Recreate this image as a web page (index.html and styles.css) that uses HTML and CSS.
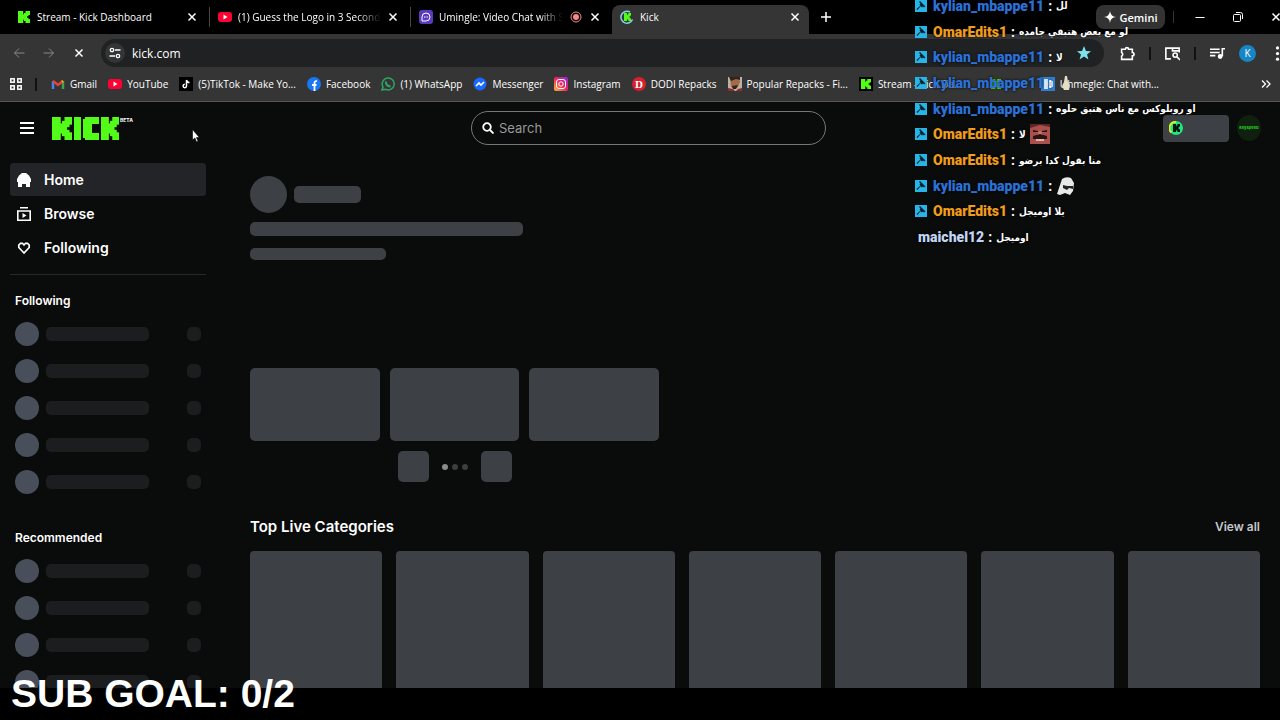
FILE: index.html
```
<!DOCTYPE html>
<html lang="en">
  <head>
    <meta charset="UTF-8" />
    <meta name="viewport" content="width=device-width, initial-scale=1.0" />
    <title>Kick</title>
    <link rel="stylesheet" href="styles.css">
  </head>
  <body>
    <!-- shared icons -->
    <svg class="defs" aria-hidden="true">
      <symbol id="k" viewBox="0 0 16 18" preserveAspectRatio="none">
        <rect width="7" height="18"/><rect x="10" width="6" height="6"/><rect x="8" y="3" width="6" height="5"/>
        <rect x="6" y="5" width="6" height="8"/><rect x="8" y="10" width="6" height="5"/><rect x="10" y="12" width="6" height="6"/>
      </symbol>
      <symbol id="close" viewBox="0 0 12 12"><path d="M2.5 2.5l7 7M9.500 2.500l-7 7" fill="none" stroke="currentColor" stroke-width="1.500"/></symbol>
      <symbol id="yt" viewBox="0 0 14 14"><rect y="2" width="14" height="10" rx="3" fill="#f03"/><path d="M5.500 4.500v5l4-2.500z" fill="#fff"/></symbol>
      <symbol id="mod" viewBox="0 0 12 12"><rect width="12" height="12" fill="#25b5e8"/><path d="M5 1l5.500 5.500-1.500 1-1-1-1 1-1.500-1.200L2.500 10 1.500 9l4-3.500L4.500 4.500l1-1L4 2z" fill="#08202c"/></symbol>
    </svg>

    <header class="browser">
      <div class="tabs">
        <div class="tab">
          <svg class="ico green" viewBox="0 0 14 14"><use href="#k" x="1" y="1" width="12" height="12"/></svg>
          <span>Stream - Kick Dashboard</span>
          <button aria-label="Close tab"><svg><use href="#close"/></svg></button>
        </div>
        <div class="tab">
          <svg class="ico"><use href="#yt"/></svg>
          <span class="fade">(1) Guess the Logo in 3 Seconds</span>
          <button aria-label="Close tab"><svg><use href="#close"/></svg></button>
        </div>
        <div class="tab">
          <svg class="ico" viewBox="0 0 14 14"><rect width="14" height="14" rx="3" fill="#5b3bbd"/><path d="M3 11V7a4 4 0 1 1 4 4z" fill="none" stroke="#fff"/><path d="M5 7h1M6.500 7h1M8 7h1" stroke="#fff"/></svg>
          <span class="fade">Umingle: Video Chat with Strangers</span>
          <svg class="ico rec" viewBox="0 0 14 14"><circle cx="7" cy="7" r="5" fill="none" stroke="#f28b82"/><circle cx="7" cy="7" r="3" fill="#f28b82"/></svg>
          <button aria-label="Close tab"><svg><use href="#close"/></svg></button>
        </div>
        <div class="tab active">
          <svg class="ico green" viewBox="0 0 14 14"><path d="M10 2a6 6 0 1 0 2.500 7.500" fill="none" stroke="#7fd6e0" stroke-width="1.500"/><use href="#k" x="4" y="3" width="7" height="8"/></svg>
          <span>Kick</span>
          <button aria-label="Close tab"><svg><use href="#close"/></svg></button>
        </div>
        <button class="new-tab" aria-label="New tab"><svg viewBox="0 0 12 12"><path d="M6 1v10M1 6h10" stroke="currentColor" stroke-width="1.500"/></svg></button>
        <button class="gemini"><svg viewBox="0 0 12 12"><path d="M6 0Q6.500 5.500 12 6 6.500 6.500 6 12 5.500 6.500 0 6 5.500 5.500 6 0z" fill="#fff"/></svg>Gemini</button>
        <div class="window-buttons">
          <button aria-label="Minimize"><svg viewBox="0 0 12 12"><path d="M1.500 6.500h9" stroke="currentColor"/></svg></button>
          <button aria-label="Restore"><svg viewBox="0 0 12 12" fill="none" stroke="currentColor"><rect x="1.500" y="3.500" width="7" height="7" rx="1"/><path d="M4 1.500h4.500a2 2 0 0 1 2 2V8"/></svg></button>
          <button aria-label="Close"><svg><use href="#close"/></svg></button>
        </div>
      </div>

      <div class="toolbar">
        <button class="dim" aria-label="Back"><svg viewBox="0 0 12 12" fill="none" stroke="currentColor"><path d="M11.500 6H1.500M6 1.500L1.500 6 6 10.500"/></svg></button>
        <button class="dim" aria-label="Forward"><svg viewBox="0 0 12 12" fill="none" stroke="currentColor"><path d="M.5 6h10M6 1.500L10.500 6 6 10.500"/></svg></button>
        <button aria-label="Stop"><svg><use href="#close"/></svg></button>
        <div class="address">
          <button class="site" aria-label="Site information"><svg viewBox="0 0 12 12" fill="none" stroke="currentColor" stroke-width="1.300"><circle cx="3" cy="3" r="1.700"/><path d="M6 3h5.500M.5 9H6"/><circle cx="9" cy="9" r="1.700"/></svg></button>
          <input type="text" value="kick.com" aria-label="Address">
          <button aria-label="Bookmark this tab"><svg class="star" viewBox="0 0 12 12"><path d="M6 0l1.700 4.200 4.300.2-3.400 2.800L9.800 11.500 6 9.100l-3.800 2.400 1.200-4.300L0 4.400l4.300-.2z" fill="#7fe0ea"/></svg></button>
        </div>
        <div class="tools">
          <button aria-label="Extensions"><svg viewBox="0 0 14 14" fill="none" stroke="currentColor" stroke-width="1.500"><path d="M1.500 3h3.500a1.500 1.500 0 0 1 3 0h3.500v3a1.600 1.600 0 0 1 0 3.200v3.300h-10V9.500a2 2 0 0 0 0-3.500z"/></svg></button>
          <i></i>
          <button aria-label="Search tabs"><svg viewBox="0 0 14 14" fill="none" stroke="currentColor" stroke-width="1.500"><path d="M5.500 12H0.800V2h12.500v4M7 2v2.500h6"/><circle cx="9.500" cy="8.500" r="2"/><path d="M11 10l3 3"/></svg></button>
          <i></i>
          <button aria-label="Media"><svg viewBox="0 0 14 14" fill="none" stroke="currentColor" stroke-width="1.500"><path d="M0 3h9M0 6h9M0 9h5M14 2.500h-2.500v7"/><circle cx="9.500" cy="9.800" r="1.500" fill="currentColor"/></svg></button>
          <button class="profile">K</button>
          <button class="more" aria-label="More"><svg viewBox="0 0 12 12" fill="currentColor"><circle cx="6" cy="1.500" r="1.300"/><circle cx="6" cy="6" r="1.300"/><circle cx="6" cy="10.500" r="1.300"/></svg></button>
        </div>
      </div>

      <nav class="bookmarks">
        <button class="apps" aria-label="Apps"><svg viewBox="0 0 12 12" fill="none" stroke="currentColor" stroke-width="1.500"><rect x=".8" y=".8" width="3.400" height="3.400"/><rect x="7.800" y=".8" width="3.400" height="3.400"/><rect x=".8" y="7.800" width="3.400" height="3.400"/><rect x="7.800" y="7.800" width="3.400" height="3.400"/></svg></button>
        <i></i>
        <a href="#"><svg class="ico" viewBox="0 0 14 14" fill="none" stroke-width="2.500"><path d="M2 12V4" stroke="#4285f4"/><path d="M12 12V4" stroke="#34a853"/><path d="M2 4l5 4 5-4" stroke="#ea4335"/><path d="M11 4.800l1-.8" stroke="#fbbc04"/></svg>Gmail</a>
        <a href="#"><svg class="ico"><use href="#yt"/></svg>YouTube</a>
        <a href="#"><svg class="ico" viewBox="0 0 14 14"><rect width="14" height="14" fill="#000"/><path d="M7.500 3v6a1.700 1.700 0 1 1-1.700-1.700M7.500 3q.5 2.500 3 2.500" fill="none" stroke="#fff" stroke-width="1.500"/></svg>(5)TikTok - Make Yo...</a>
        <a href="#"><svg class="ico" viewBox="0 0 14 14"><circle cx="7" cy="7" r="7" fill="#1877f2"/><path d="M7.500 14V6q0-2 2.500-1.800M5 8h4.500" fill="none" stroke="#fff" stroke-width="1.800"/></svg>Facebook</a>
        <a href="#"><svg class="ico" viewBox="0 0 14 14" fill="none"><path d="M1 13l1-3a6 6 0 1 1 2.200 2.200z" stroke="#2fa565" stroke-width="1.500"/><path d="M4.800 4.500q0 4.500 4.700 5" stroke="#2fa565" stroke-width="2"/></svg>(1) WhatsApp</a>
        <a href="#"><svg class="ico" viewBox="0 0 14 14"><circle cx="7" cy="7" r="6.500" fill="#1769ff"/><path d="M3 9l3-3 2 2 3-3" fill="none" stroke="#fff" stroke-width="1.600"/></svg>Messenger</a>
        <a href="#"><svg class="ico" viewBox="0 0 14 14"><defs><linearGradient id="ig" x1="0" y1="1" x2="1" y2="0"><stop stop-color="#ffc02e"/><stop offset=".5" stop-color="#f0245e"/><stop offset="1" stop-color="#8a2be2"/></linearGradient></defs><rect width="14" height="14" rx="2" fill="url(#ig)"/><g fill="none" stroke="#fff"><rect x="2.500" y="2.500" width="9" height="9" rx="2.500"/><circle cx="7" cy="7" r="2.200"/></g></svg>Instagram</a>
        <a href="#"><svg class="ico" viewBox="0 0 14 14"><circle cx="7" cy="7" r="7" fill="#d5202f"/><text x="7" y="11" text-anchor="middle" class="dodi">D</text></svg>DODI Repacks</a>
        <a href="#"><svg class="ico" viewBox="0 0 14 14"><rect width="14" height="14" fill="#b9b2aa"/><path d="M2 0h9l1 5-2 5-3 2-4-2z" fill="#a46b48"/><path d="M1 0h11v3L8 2 3 4zM4 9l6-1-2 4H5z" fill="#35221a"/><path d="M0 11l5 1 2 2H0zM14 11l-4 1-2 2h6z" fill="#8c2c25"/></svg>Popular Repacks - Fi...</a>
        <a href="#"><svg class="ico green" viewBox="0 0 14 14"><rect width="14" height="14" fill="#000"/><use href="#k" x="2" y="2" width="10" height="10"/></svg>Stream - Kick Da...</a>
        <a href="#" class="short" aria-label="Kick"><svg class="ico green" viewBox="0 0 14 14"><use href="#k" x="2" y="2" width="10" height="10"/></svg></a>
        <a href="#" class="last"><svg class="ico" viewBox="0 0 14 14"><rect width="14" height="14" fill="#2f7fd6"/><path d="M3 2h4v10H3zM8 4h4v6H8z" fill="#d6e6f5"/></svg>Uhmegle: Chat with...</a>
        <button class="overflow" aria-label="More bookmarks"><svg viewBox="0 0 12 12" fill="none" stroke="currentColor" stroke-width="1.300"><path d="M2 2.500L5.500 6 2 9.500M6.500 2.500L10 6 6.500 9.500"/></svg></button>
      </nav>
    </header>

    <div class="page">
      <header class="topbar">
        <div class="brand">
          <button aria-label="Menu"><svg viewBox="0 0 14 12"><path d="M0 1h14M0 6h14M0 11h14" stroke="#fff" stroke-width="2"/></svg></button>
          <a href="#" class="logo" aria-label="Kick">
            <svg viewBox="0 0 67 23"><use href="#k" width="20" height="23"/><rect x="22" width="7" height="23"/><path d="M33 0h14v7h-7v9h7v7H33v-2h-2V2h2z"/><use href="#k" x="49" width="18" height="23"/></svg>
          </a>
          <span class="beta">BETA</span>
        </div>
        <label class="search">
          <svg viewBox="0 0 12 12" fill="none" stroke="#fff" stroke-width="1.800"><circle cx="5" cy="5" r="3.800"/><path d="M8 8l3.500 3.500"/></svg>
          <input type="text" placeholder="Search" aria-label="Search">
        </label>
        <div class="account">
          <button class="kicks" aria-label="Kicks"><svg viewBox="0 0 14 14"><circle cx="7" cy="7" r="7" fill="#21e57e"/><path d="M2.500 11.500A6 6 0 0 1 7 1" fill="none" stroke="#d5ef2d" stroke-width="2"/><use href="#k" x="4" y="3" width="7" height="8" fill="#05170c"/></svg></button>
          <button class="avatar">keyspeed</button>
        </div>
      </header>

      <div class="content">
        <aside class="sidebar">
          <nav>
            <a href="#" class="current"><svg viewBox="0 0 14 14" fill="#fff"><path d="M5 0h4l3 2.500L14 6v3h-1v5H9v-3H5v3H1V9H0V6l2-3.500z"/></svg>Home</a>
            <a href="#"><svg viewBox="0 0 14 14" fill="none" stroke="#fff" stroke-width="1.600"><path d="M3 .8h8M.8 4h12.400v9.200H.8z"/><path d="M5.500 6v5L9.500 8.500z" fill="#fff" stroke="none"/></svg>Browse</a>
            <a href="#"><svg viewBox="0 0 14 14" fill="none" stroke="#fff" stroke-width="1.700"><path d="M7 12L1.800 6.500V4L3.500 2.300h2L7 4l1.500-1.700h2L12.200 4v2.500z"/></svg>Following</a>
          </nav>
          <h2>Following</h2>
          <ul>
            <li><b></b><span></span><i></i></li>
            <li><b></b><span></span><i></i></li>
            <li><b></b><span></span><i></i></li>
            <li><b></b><span></span><i></i></li>
            <li><b></b><span></span><i></i></li>
          </ul>
          <h2>Recommended</h2>
          <ul>
            <li><b></b><span></span><i></i></li>
            <li><b></b><span></span><i></i></li>
            <li><b></b><span></span><i></i></li>
            <li><b></b><span></span><i></i></li>
          </ul>
        </aside>

        <main>
          <section class="featured">
            <div class="streamer"><div class="bone photo"></div><div class="bone username"></div></div>
            <div class="bone line"></div>
            <div class="bone line short"></div>
            <div class="previews">
              <div class="bone"></div><div class="bone"></div><div class="bone"></div>
            </div>
            <div class="pager">
              <button class="bone" aria-label="Previous"></button>
              <div class="dots"><i class="on"></i><i></i><i></i></div>
              <button class="bone" aria-label="Next"></button>
            </div>
          </section>
          <section>
            <div class="heading"><h1>Top Live Categories</h1><a href="#">View all</a></div>
            <div class="categories">
              <div class="bone"></div><div class="bone"></div><div class="bone"></div><div class="bone"></div>
              <div class="bone"></div><div class="bone"></div><div class="bone"></div>
            </div>
          </section>
        </main>
      </div>
    </div>
    <div class="bottom"></div>

    <svg class="cursor" viewBox="0 0 8 14"><path d="M.5.5v10.500l2.300-2 1.800 4 1.500-.7-1.700-3.800h3z" fill="#fff" stroke="#000" stroke-width=".6"/></svg>

    <!-- stream overlay -->
    <div class="chat">
      <p><svg><use href="#mod"/></svg><b class="blue">kylian_mbappe11</b> : <bdi>لل</bdi></p>
      <p><svg><use href="#mod"/></svg><b class="orange">OmarEdits1</b> : <bdi>لو مع بعض هتبقي جامده</bdi></p>
      <p><svg><use href="#mod"/></svg><b class="blue">kylian_mbappe11</b> : <bdi>لا</bdi></p>
      <p><svg><use href="#mod"/></svg><b class="blue">kylian_mbappe11</b> : <svg class="emote" viewBox="0 0 20 20"><path d="M9 3l2 0 1 6 2 3-1 5H8l-2-4 2-4z" fill="#e4dfc4"/></svg></p>
      <p><svg><use href="#mod"/></svg><b class="blue">kylian_mbappe11</b> : <bdi>او روبلوكس مع ناس هتبق حلوه</bdi></p>
      <p><svg><use href="#mod"/></svg><b class="orange">OmarEdits1</b> : <bdi>لا</bdi> <svg class="emote" viewBox="0 0 20 20"><rect width="20" height="20" fill="#a8504c"/><path d="M0 0h20v3L10 1 0 4z" fill="#5a2725"/><path d="M3 6l5 1v1H3zM12 7l5-1v2h-5z" fill="#2c1110"/><path d="M9 7h2l2 4H7z" fill="#c8706a"/><path d="M3 12l7-2 7 2v3H3z" fill="#2a1312"/><path d="M6 15h8v2H6z" fill="#d9b3ac"/></svg></p>
      <p><svg><use href="#mod"/></svg><b class="orange">OmarEdits1</b> : <bdi>منا بقول كدا برضو</bdi></p>
      <p><svg><use href="#mod"/></svg><b class="blue">kylian_mbappe11</b> : <svg class="emote" viewBox="0 0 20 20"><path d="M6 3q4-3 9-1l3 5-1 8-3 4-5-2-5 2-3-1z" fill="#e8e8e8"/><path d="M7 9l4 1h6v3l-4-1-2 2-4-2z" fill="#222"/></svg></p>
      <p><svg><use href="#mod"/></svg><b class="orange">OmarEdits1</b> : <bdi>يلا اوميجل</bdi></p>
      <p class="plain"><b>maichel12</b> : <bdi>اوميجل</bdi></p>
    </div>
    <div class="goal">SUB GOAL: 0/2</div>
  </body>
</html>
```
FILE: styles.css
```
* {
    box-sizing: border-box;
}
body {
    margin: 0;
    height: 100vh;
    display: flex;
    flex-direction: column;
    overflow: hidden;
    position: relative;
    background-color: #000;
    color: #fff;
    font-family: Inter, sans-serif;
}
button {
    display: flex;
    align-items: center;
    justify-content: center;
    padding: 0;
    border: none;
    background: none;
    color: inherit;
    font: inherit;
    cursor: pointer;
}
a {
    color: inherit;
    text-decoration: none;
}
input {
    border: none;
    outline: none;
    background: none;
    color: inherit;
    font: inherit;
    padding: 0;
    min-width: 0;
    flex: 1;
}
svg {
    display: block;
    flex: none;
    width: 12px;
    height: 12px;
}
.defs {
    position: absolute;
    width: 0;
    height: 0;
}
.ico {
    width: 14px;
    height: 14px;
}
.green {
    fill: #53fc18;
}

/* browser window */
.browser {
    background-color: #353535;
    border-bottom: 1px solid #555;
    font-family: "Open Sans", sans-serif;
    font-size: 10px;
    font-weight: 500;
}
.tabs {
    display: flex;
    align-items: center;
    height: 34px;
    padding-left: 9px;
    background-color: #000;
}
.tab {
    display: flex;
    align-items: center;
    gap: 6px;
    width: 201px;
    height: 20px;
    padding: 0 11px 0 8px;
    border-right: 1px solid #444;
    white-space: nowrap;
}
.tab span {
    flex: 1;
    overflow: hidden;
}
.tab .fade {
    -webkit-mask-image: linear-gradient(to left, transparent, #000 24px);
}
.tab.active {
    height: 29px;
    width: 197px;
    padding: 0 8px 5px;
    border: none;
    align-self: flex-end;
    border-radius: 8px 8px 0 0;
    background-color: #353535;
}
.tab:nth-child(3) {
    border: none;
}
.new-tab {
    margin-left: 11px;
}
.gemini {
    gap: 4px;
    width: 69px;
    height: 24px;
    margin-left: auto;
    border-radius: 8px;
    background-color: #333;
    font-size: 11px;
    font-weight: 600;
}
.window-buttons {
    display: flex;
    gap: 26px;
    margin: 0 -2px 0 8px;
    padding-left: 20px;
    border-left: 1px solid #333;
}
.toolbar {
    display: flex;
    align-items: center;
    gap: 18px;
    height: 38px;
    padding: 0 0 0 13px;
}
.dim {
    color: #888;
}
.address {
    flex: 1;
    display: flex;
    align-items: center;
    gap: 7px;
    height: 28px;
    margin-left: -2px;
    padding: 0 13px 0 4px;
    border-radius: 14px;
    background-color: #1f2123;
    font-size: 12px;
}
.site {
    width: 20px;
    height: 20px;
    border-radius: 10px;
    background-color: #353535;
}
.star {
    width: 14px;
    height: 14px;
}
.tools {
    display: flex;
    align-items: center;
    gap: 14px;
    margin: 0 -5px 0 -2px;
}
.tools svg {
    width: 15px;
    height: 15px;
}
.browser i {
    width: 2px;
    height: 13px;
    background-color: #111;
}
.profile {
    width: 17px;
    height: 17px;
    border-radius: 50%;
    background-color: #1686c4;
    font-size: 10px;
}
.bookmarks {
    display: flex;
    align-items: center;
    height: 29px;
    padding: 0 8px 5px 10px;
    gap: 11px;
}
.bookmarks a {
    display: flex;
    align-items: center;
    gap: 5px;
    white-space: nowrap;
}
.bookmarks .apps {
    margin-right: 2px;
}
.bookmarks .apps + i {
    margin-right: 3px;
}
.bookmarks .short {
    margin-left: 16px;
}
.bookmarks .last {
    margin-left: 27px;
}
.overflow {
    margin-left: auto;
}
.dodi {
    font: bold 11px "Liberation Serif", serif;
    fill: #fff;
}

/* kick page */
.page {
    flex: 1;
    min-height: 0;
    overflow: hidden;
    display: flex;
    flex-direction: column;
    background-color: #0a0b0b;
}
.topbar {
    display: grid;
    grid-template-columns: 1fr 355px 1fr;
    align-items: center;
    flex: none;
    height: 52px;
    padding: 0 3px 0 20px;
}
.brand {
    display: flex;
    align-items: center;
}
.brand button svg {
    width: 14px;
}
.logo {
    margin-left: 18px;
    fill: #53fc18;
}
.logo svg {
    width: 67px;
    height: 23px;
}
.beta {
    align-self: flex-start;
    margin-left: 1px;
    font-size: 5px;
    line-height: 6px;
    font-weight: 700;
}
.search {
    display: flex;
    align-items: center;
    gap: 5px;
    height: 34px;
    padding: 0 10px;
    border: 1px solid #777;
    border-radius: 17px;
    font-size: 13px;
}
.search input::placeholder {
    color: #999;
}
.account {
    display: flex;
    justify-content: flex-end;
    gap: 8px;
    padding-right: 16px;
}
.kicks {
    justify-content: flex-start;
    width: 66px;
    height: 27px;
    padding-left: 6px;
    border-radius: 4px;
    background-color: #3d4045;
}
.kicks svg {
    width: 14px;
    height: 14px;
}
.avatar {
    width: 24px;
    height: 26px;
    border-radius: 50%;
    background-color: #10200f;
    color: #27c322;
    font-size: 4px;
    font-weight: 800;
}
.content {
    flex: 1;
    min-height: 0;
    display: flex;
}
.sidebar {
    width: 216px;
    padding: 9px 10px 0;
}
.sidebar nav {
    display: flex;
    flex-direction: column;
    gap: 1px;
    padding-bottom: 10px;
    border-bottom: 1px solid #26282a;
}
.sidebar nav a {
    display: flex;
    align-items: center;
    gap: 13px;
    height: 33px;
    padding-left: 7px;
    border-radius: 3px;
    font-size: 14px;
    font-weight: 600;
}
.sidebar nav svg {
    width: 14px;
    height: 14px;
}
.sidebar .current {
    background-color: #222427;
}
.sidebar h2 {
    margin: 17px 5px 5px;
    font-size: 12px;
    line-height: 18px;
    font-weight: 600;
}
.sidebar ul {
    list-style: none;
    margin: 0 0 29px;
    padding: 0 5px;
}
.sidebar li {
    display: flex;
    align-items: center;
    height: 37px;
}
.sidebar li b {
    width: 24px;
    height: 24px;
    margin-right: 7px;
    border-radius: 50%;
    background-color: #484e5a;
}
.sidebar li span {
    width: 103px;
    height: 14px;
    border-radius: 5px;
    background-color: #1b1d1f;
}
.sidebar li i {
    width: 14px;
    height: 14px;
    margin-left: auto;
    border-radius: 5px;
    background-color: #1b1d1f;
}
main {
    flex: 1;
    padding: 22px 20px 0 34px;
}
.bone {
    border-radius: 5px;
    background-color: #3d4045;
}
.featured {
    width: 409px;
}
.streamer {
    display: flex;
    align-items: center;
    gap: 7px;
    margin-bottom: 9px;
}
.photo {
    width: 37px;
    height: 37px;
    border-radius: 50%;
}
.username {
    width: 67px;
    height: 17px;
}
.line {
    width: 273px;
    height: 14px;
    margin-bottom: 12px;
}
.line.short {
    width: 136px;
    height: 12px;
}
.previews {
    display: grid;
    grid-template-columns: repeat(3, 1fr);
    gap: 10px;
    margin-top: 108px;
}
.previews .bone {
    height: 73px;
}
.pager {
    display: flex;
    align-items: center;
    justify-content: center;
    gap: 13px;
    margin-top: 10px;
}
.pager button {
    width: 31px;
    height: 31px;
}
.dots {
    display: flex;
    gap: 4px;
}
.dots i {
    width: 6px;
    height: 6px;
    border-radius: 50%;
    background-color: #3c3d3e;
}
.dots .on {
    background-color: #8b8c8c;
}
.heading {
    display: flex;
    align-items: center;
    justify-content: space-between;
    height: 24px;
    margin: 32px 0 13px;
}
.heading h1 {
    margin: 0;
    font-size: 15px;
    font-weight: 600;
}
.heading a {
    color: #c4c6ca;
    font-size: 12px;
    font-weight: 600;
}
.categories {
    display: grid;
    grid-template-columns: repeat(7, 1fr);
    gap: 14px;
}
.categories .bone {
    height: 177px;
    border-radius: 4px;
}
.bottom {
    flex: none;
    height: 32px;
}

/* things drawn over the page */
.cursor {
    position: absolute;
    left: 192px;
    top: 129px;
    width: 8px;
    height: 14px;
}
.chat {
    position: absolute;
    top: -7px;
    left: 915px;
    display: grid;
    grid-template-rows: repeat(10, 1fr);
    height: 257px;
    font-family: Roboto, "DejaVu Sans", sans-serif;
    font-size: 14px;
    font-weight: 700;
    text-shadow: 0 0 3px #000;
}
.chat p {
    display: flex;
    align-items: center;
    gap: 4px;
    margin: 0;
    white-space: nowrap;
}
.chat svg {
    margin-right: 2px;
}
.chat .emote {
    width: 20px;
    height: 20px;
}
.chat bdi {
    font-family: "DejaVu Sans Condensed", "DejaVu Sans", sans-serif;
    font-size: 10px;
    font-weight: 700;
}
.blue {
    color: #2a72d8;
}
.orange {
    color: #f09c1c;
}
.plain {
    padding-left: 3px;
}
.plain b {
    color: #c3d5f5;
}
.goal {
    position: absolute;
    left: 11px;
    bottom: 4px;
    font-family: "Liberation Sans", sans-serif;
    font-size: 39px;
    line-height: 44px;
    font-weight: 700;
}
```
